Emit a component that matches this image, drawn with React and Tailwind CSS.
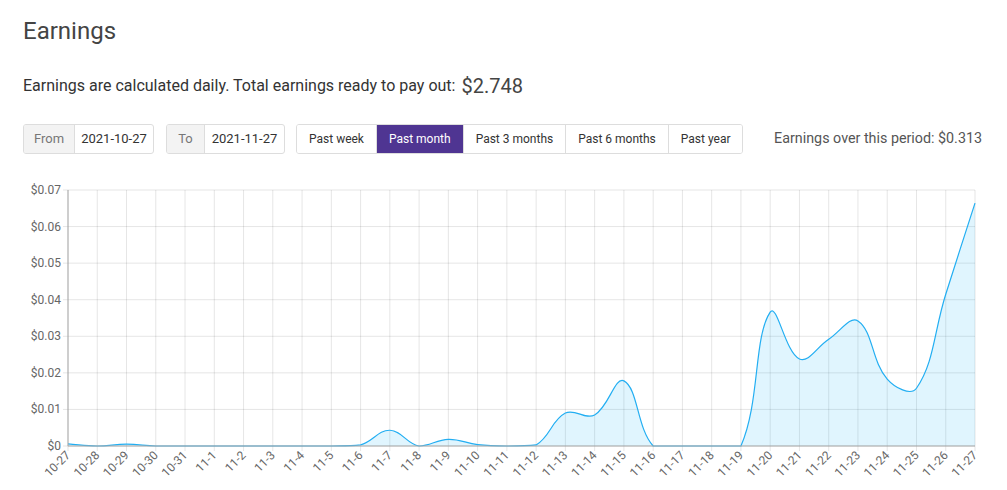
import React from 'react';

const labels = ['10-27', '10-28', '10-29', '10-30', '10-31'];
for (let d = 1; d <= 27; d++) labels.push(`11-${d}`);

const values = [
  0.0006, 0, 0.0005, 0, 0, 0, 0, 0, 0, 0, 0.0003, 0.0043, 0, 0.0018, 0.0004, 0, 0.0003,
  0.009, 0.0085, 0.0178, 0, 0, 0, 0, 0.0366, 0.0238, 0.0292, 0.0342, 0.0183, 0.0158, 0.0415, 0.0664,
];

const LEFT = 68;
const RIGHT = 975;
const TOP = 189;
const BOTTOM = 445;
const MAX = 0.07;

const xAt = (i) => LEFT + (i * (RIGHT - LEFT)) / (labels.length - 1);
const yAt = (v) => BOTTOM - (v / MAX) * (BOTTOM - TOP);

// chart.js style spline, control points capped to chart area
function buildPath(pts) {
  const t = 0.4;
  const ctrl = pts.map((p, i) => {
    const prev = pts[i - 1] || p;
    const next = pts[i + 1] || p;
    const d01 = Math.hypot(p.x - prev.x, p.y - prev.y);
    const d12 = Math.hypot(next.x - p.x, next.y - p.y);
    const s01 = d01 / (d01 + d12) || 0;
    const s12 = d12 / (d01 + d12) || 0;
    const fa = t * s01;
    const fb = t * s12;
    const cap = (y) => Math.min(BOTTOM, Math.max(TOP, y));
    return {
      px: p.x - fa * (next.x - prev.x),
      py: cap(p.y - fa * (next.y - prev.y)),
      nx: p.x + fb * (next.x - prev.x),
      ny: cap(p.y + fb * (next.y - prev.y)),
    };
  });
  let d = `M${pts[0].x},${pts[0].y}`;
  for (let i = 1; i < pts.length; i++) {
    d += ` C${ctrl[i - 1].nx},${ctrl[i - 1].ny} ${ctrl[i].px},${ctrl[i].py} ${pts[i].x},${pts[i].y}`;
  }
  return d;
}

function Chart() {
  const pts = values.map((v, i) => ({ x: xAt(i), y: yAt(v) }));
  const line = buildPath(pts);
  const area = `${line} L${RIGHT},${BOTTOM} L${LEFT},${BOTTOM} Z`;
  const ticks = [0, 0.01, 0.02, 0.03, 0.04, 0.05, 0.06, 0.07];

  return (
    <svg width="1007" height="320" viewBox="0 170 1007 320" className="block" style={{ fontFamily: 'Roboto, sans-serif' }}>
      {ticks.map((v) => (
        <g key={v}>
          <line x1={LEFT - 5} x2={RIGHT} y1={yAt(v)} y2={yAt(v)} stroke="rgba(0,0,0,0.1)" />
          <text x={LEFT - 7} y={yAt(v) + 4} textAnchor="end" fontSize="12" fill="#666">
            {v === 0 ? '$0' : `$${v.toFixed(2)}`}
          </text>
        </g>
      ))}
      {labels.map((l, i) => (
        <g key={l}>
          <line x1={xAt(i)} x2={xAt(i)} y1={TOP} y2={BOTTOM + 5} stroke="rgba(0,0,0,0.1)" />
          <text
            x={xAt(i) + 3}
            y={BOTTOM + 10}
            textAnchor="end"
            fontSize="12"
            fill="#666"
            transform={`rotate(-45 ${xAt(i) + 3} ${BOTTOM + 10})`}
          >
            {l}
          </text>
        </g>
      ))}
      <path d={area} fill="rgba(3,169,244,0.12)" />
      <path d={line} fill="none" stroke="#22aef2" strokeWidth="1.2" />
      <line x1={LEFT} x2={LEFT} y1={TOP} y2={BOTTOM} stroke="#aaa" />
      <line x1={LEFT} x2={RIGHT} y1={BOTTOM} y2={BOTTOM} stroke="#aaa" />
    </svg>
  );
}

const ranges = ['Past week', 'Past month', 'Past 3 months', 'Past 6 months', 'Past year'];

export default function App() {
  return (
    <div className="w-[1007px] h-[490px] overflow-hidden bg-white font-['Roboto',sans-serif]">
      <div className="px-[23px] pt-[16px]">
        <h1 className="text-[24px] leading-[30px] text-[#444]">Earnings</h1>
        <div className="mt-[28px] flex items-center text-[16px] leading-[24px] text-[#333]">
          Earnings are calculated daily. Total earnings ready to pay out:
          <span className="ml-[6px] text-[20px] text-[#444]">$2.748</span>
        </div>

        <div className="mt-[26px] flex items-center text-[13px] text-[#333]">
          <div className="flex h-[30px] border border-[#ddd] rounded-[3px] overflow-hidden">
            <span className="w-[51px] flex items-center justify-center bg-[#f3f3f3] text-[#777] border-r border-[#ddd]">From</span>
            <span className="w-[78px] flex items-center justify-center">2021-10-27</span>
          </div>
          <div className="ml-[12px] flex h-[30px] border border-[#ddd] rounded-[3px] overflow-hidden">
            <span className="w-[38px] flex items-center justify-center bg-[#f3f3f3] text-[#777] border-r border-[#ddd]">To</span>
            <span className="w-[79px] flex items-center justify-center">2021-11-27</span>
          </div>
          <div className="ml-[11px] flex h-[30px] border border-[#ddd] rounded-[3px] overflow-hidden text-[12px]">
            {ranges.map((r, i) => (
              <button
                key={r}
                type="button"
                className={`px-[12px] flex items-center ${i > 0 ? 'border-l border-[#ddd]' : ''} ${
                  r === 'Past month' ? 'bg-[#4f3592] text-white border-[#4f3592]' : 'bg-white text-[#333]'
                }`}
              >
                {r}
              </button>
            ))}
          </div>
          <span className="ml-auto mr-[2px] text-[14.3px] text-[#555]">Earnings over this period: $0.313</span>
        </div>
      </div>
      <div className="mt-[17px]">
        <Chart />
      </div>
    </div>
  );
}
